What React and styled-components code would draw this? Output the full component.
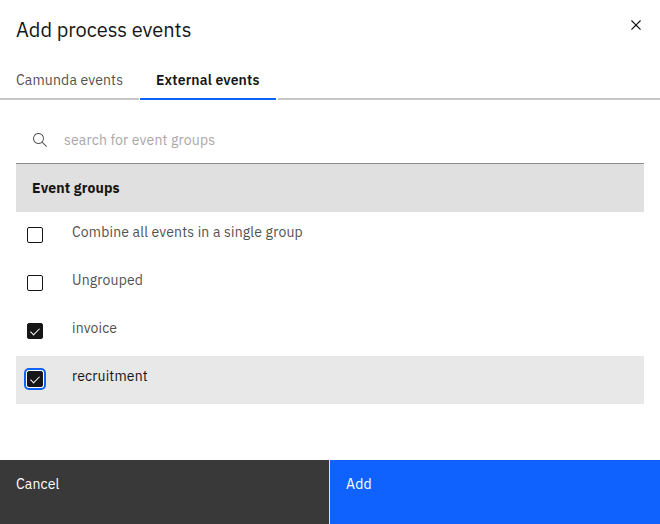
import React, { useState } from "react";
import styled, { createGlobalStyle } from "styled-components";

const GlobalStyle = createGlobalStyle`
  *, *::before, *::after { box-sizing: border-box; }
  body {
    margin: 0;
    background: #fff;
    color: #161616;
    font-family: "IBM Plex Sans", Roboto, "Liberation Sans", sans-serif;
    font-size: 14px;
    line-height: 18px;
    letter-spacing: 0.16px;
  }
`;

const Modal = styled.section`
  display: flex;
  flex-direction: column;
  width: 660px;
  height: 524px;
  background: #fff;
  overflow: hidden;
`;

const Header = styled.header`
  display: flex;
  justify-content: space-between;
  height: 60px;
  padding: 17px 14px 0 16px;
`;

const Title = styled.h1`
  margin: 0;
  font-size: 20px;
  line-height: 26px;
  font-weight: 400;
  letter-spacing: 0;
`;

const CloseButton = styled.button`
  display: flex;
  width: 20px;
  height: 20px;
  margin-top: -2px;
  padding: 0;
  border: 0;
  background: none;
  color: #161616;
`;

const TabList = styled.nav`
  display: flex;
  height: 40px;
  flex: none;
`;

const Tab = styled.button`
  display: flex;
  width: ${(p) => p.$width}px;
  margin: 0 ${(p) => p.$gap}px 0 0;
  padding: 11px 0 0 16px;
  border: 0;
  border-bottom: 2px solid ${(p) => (p.$active ? "#0f62fe" : "#c6c6c6")};
  background: none;
  color: ${(p) => (p.$active ? "#161616" : "#525252")};
  font: inherit;
  font-weight: ${(p) => (p.$active ? 600 : 400)};
  letter-spacing: inherit;
  white-space: nowrap;
`;

const TabFiller = styled.div`
  flex: 1;
  border-bottom: 2px solid #c6c6c6;
`;

const Content = styled.div`
  flex: 1;
  padding: 16px 16px 0;
`;

const SearchField = styled.label`
  display: flex;
  align-items: center;
  gap: 16px;
  height: 48px;
  padding: 0 16px;
  border-bottom: 1px solid #8d8d8d;
  color: #525252;
`;

const SearchInput = styled.input`
  flex: 1;
  padding: 0;
  border: 0;
  outline: 0;
  background: none;
  font: inherit;
  letter-spacing: inherit;
  &::placeholder { color: #a8a8a8; opacity: 1; }
`;

const TableHeader = styled.div`
  height: 48px;
  padding: 15px 16px;
  background: #e0e0e0;
  font-weight: 700;
`;

const Row = styled.label`
  display: flex;
  height: 48px;
  padding-left: 11px;
  background: ${(p) => (p.$highlighted ? "#e8e8e8" : "#fff")};
  color: ${(p) => (p.$highlighted ? "#161616" : "#525252")};
`;

const Checkbox = styled.span`
  display: flex;
  width: 16px;
  height: 16px;
  margin: 15px 29px 0 0;
  border: 1px solid #161616;
  border-radius: 2px;
  background: ${(p) => (p.$checked ? "#161616" : "transparent")};
  box-shadow: ${(p) => (p.$focused ? "0 0 0 1px #fff, 0 0 0 3px #0f62fe" : "none")};
`;

const CheckMark = styled.span`
  width: 9px;
  height: 5px;
  margin: 4px 0 0 3px;
  border-left: 1px solid #fff;
  border-bottom: 1px solid #fff;
  transform: translateX(-0.5px) rotate(-45deg);
`;

const RowLabel = styled.span`
  padding-top: 11px;
`;

const Footer = styled.footer`
  display: grid;
  grid-template-columns: 329px 330px;
  gap: 1px;
  height: 64px;
  background: #e0e0e0;
`;

const FooterButton = styled.button`
  display: flex;
  padding: 15px 16px;
  border: 0;
  background: ${(p) => (p.$primary ? "#0f62fe" : "#393939")};
  color: #fff;
  font: inherit;
  letter-spacing: inherit;
`;

const CloseIcon = () => (
  <svg width="20" height="20" viewBox="0 0 32 32" fill="currentColor">
    <path d="M24 9.4L22.6 8 16 14.6 9.4 8 8 9.4 14.6 16 8 22.6 9.4 24 16 17.4 22.6 24 24 22.6 17.4 16 24 9.4z" />
  </svg>
);

const SearchIcon = () => (
  <svg width="16" height="16" viewBox="0 0 16 16" fill="currentColor">
    <path d="M15 14.3L10.7 10c1.9-2.3 1.6-5.8-.7-7.7S4.2.7 2.3 3 .7 8.8 3 10.7c2 1.7 5 1.7 7 0l4.3 4.3.7-.7zM2 6.5C2 4 4 2 6.5 2S11 4 11 6.5 9 11 6.5 11 2 9 2 6.5z" />
  </svg>
);

const groups = ["Combine all events in a single group", "Ungrouped", "invoice", "recruitment"];

export default function App() {
  const [selected, setSelected] = useState(["invoice", "recruitment"]);
  const toggle = (name) =>
    setSelected((s) => (s.includes(name) ? s.filter((n) => n !== name) : [...s, name]));

  return (
    <>
      <GlobalStyle />
      <Modal>
        <Header>
          <Title>Add process events</Title>
          <CloseButton aria-label="Close"><CloseIcon /></CloseButton>
        </Header>
        <TabList>
          <Tab $width={139} $gap={1}>Camunda events</Tab>
          <Tab $width={136} $gap={2} $active>External events</Tab>
          <TabFiller />
        </TabList>
        <Content>
          <SearchField>
            <SearchIcon />
            <SearchInput placeholder="search for event groups" />
          </SearchField>
          <TableHeader>Event groups</TableHeader>
          {groups.map((name) => {
            const checked = selected.includes(name);
            const active = name === "recruitment";
            return (
              <Row key={name} $highlighted={active} onClick={() => toggle(name)}>
                <Checkbox role="checkbox" aria-checked={checked} $checked={checked} $focused={active}>
                  {checked && <CheckMark />}
                </Checkbox>
                <RowLabel>{name}</RowLabel>
              </Row>
            );
          })}
        </Content>
        <Footer>
          <FooterButton>Cancel</FooterButton>
          <FooterButton $primary>Add</FooterButton>
        </Footer>
      </Modal>
    </>
  );
}
